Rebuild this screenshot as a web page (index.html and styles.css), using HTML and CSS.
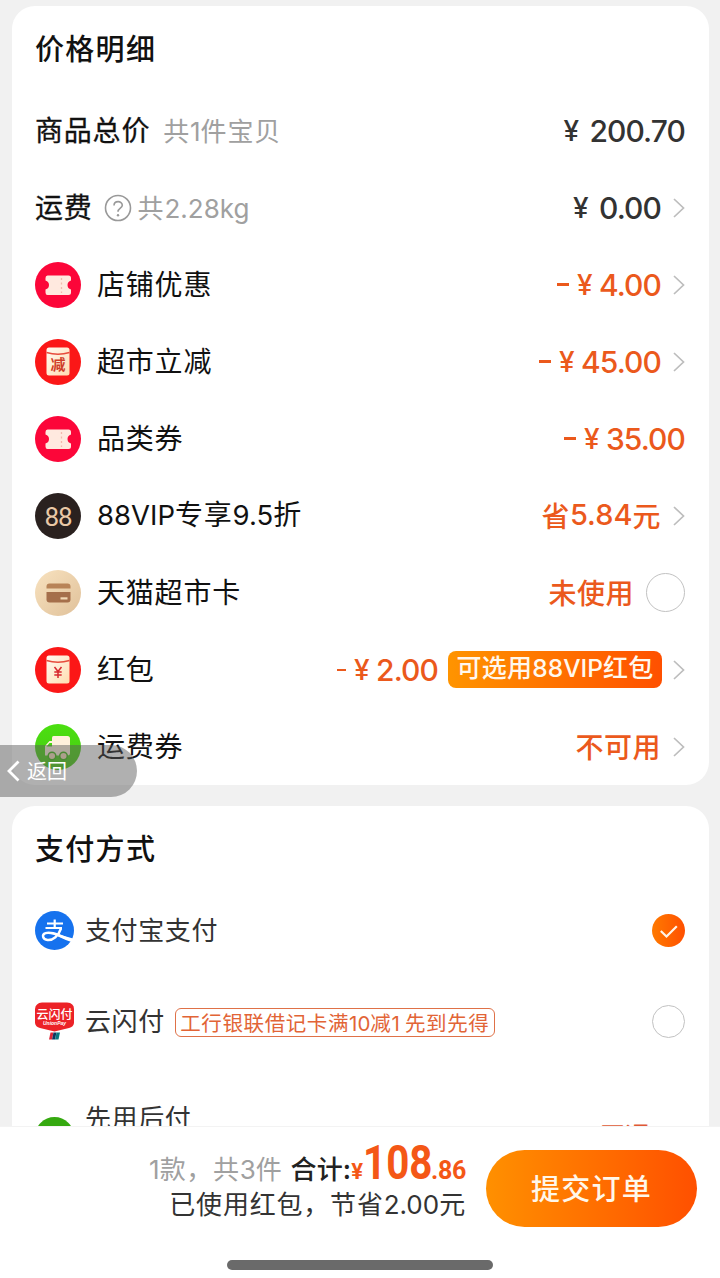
FILE: index.html
```html
<!DOCTYPE html>
<html lang="zh-CN">
<head>
<meta charset="utf-8">
<title>确认订单</title>
<link rel="stylesheet" href="styles.css">
</head>
<body>
<svg class="defs" width="0" height="0">
  <defs>
    <linearGradient id="cream" x1="0" y1="0" x2="1" y2="1"><stop offset="0" stop-color="#fffaf2"/><stop offset="1" stop-color="#ffdcb0"/></linearGradient>
    <linearGradient id="gold" x1="0" y1="0" x2="1" y2="1"><stop offset="0" stop-color="#f8e2bf"/><stop offset="1" stop-color="#e0c19a"/></linearGradient>
    <linearGradient id="green" x1="0" y1="0" x2="0" y2="1"><stop offset="0" stop-color="#4be010"/><stop offset="1" stop-color="#48c814"/></linearGradient>
    <linearGradient id="orange" x1="0" y1="0" x2="1" y2="0"><stop offset="0" stop-color="#ff7a00"/><stop offset="1" stop-color="#ff5000"/></linearGradient>
    <symbol id="chevron" viewBox="0 0 12 20"><path d="M1 1L10.5 10L1 19" fill="none" stroke="#bdbdbd" stroke-width="1.7"/></symbol>
    <symbol id="ticket" viewBox="0 0 46 46">
      <circle cx="23" cy="23" r="23" fill="#fc0639"/>
      <path d="M12.500 13.500H33.500Q36 13.500 36 16V18.500Q32.500 19.500 32.500 23Q32.500 26.500 36 27.500V30.500Q36 33 33.500 33H12.500Q10.500 33 10.500 30.500V27.500Q14 26.500 14 23Q14 19.500 10.500 18.500V16Q10.500 13.500 12.500 13.500Z" fill="#ffe9df"/>
      <path d="M26.500 16V31" stroke="#f3b9ad" stroke-width="1.300" stroke-dasharray="2 2.500"/>
    </symbol>
    <symbol id="packet" viewBox="0 0 46 46">
      <circle cx="23" cy="23" r="23" fill="#fb1717"/>
      <path d="M14 8.500H32Q34.500 8.500 34.500 11V34Q34.500 36.500 32 36.500H14Q11.500 36.500 11.500 34V11Q11.500 8.500 14 8.500Z" fill="url(#cream)"/>
      <path d="M11.500 13.500Q23 17 34.500 13.500" fill="none" stroke="#e74c3c" stroke-width="1.500"/>
    </symbol>
  </defs>
</svg>
<div class="screen">
  <main class="content">
    <section class="card price">
      <h2 class="title">价格明细</h2>
      <div class="row"><span class="label strong">商品总价</span><span class="note">共<i class="n">1</i>件宝贝</span><span class="amount dark"><b class="yen">¥</b>200.70</span></div>
      <div class="row"><span class="label strong">运费</span>
        <svg class="help" viewBox="0 0 28 28"><circle cx="14" cy="14" r="12.500" fill="none" stroke="#999" stroke-width="1.600"/><path d="M10 11.500C10 6.300 18.300 6.500 18.300 11.200C18.300 14.300 14 14 14 17.800" fill="none" stroke="#999" stroke-width="1.600"/><circle cx="14" cy="21.300" r="1.200" fill="#999"/></svg>
        <span class="note weight">共<i class="n">2.28kg</i></span><span class="amount dark"><b class="yen">¥</b>0.00</span><svg class="arrow"><use href="#chevron"/></svg></div>
      <div class="row"><svg class="icon"><use href="#ticket"/></svg><span class="label">店铺优惠</span><span class="amount"><b class="dash"></b><b class="yen near">¥</b>4.00</span><svg class="arrow"><use href="#chevron"/></svg></div>
      <div class="row"><svg class="icon" viewBox="0 0 46 46"><use href="#packet"/><text x="23" y="31" text-anchor="middle" class="cut">减</text></svg><span class="label">超市立减</span><span class="amount"><b class="dash"></b><b class="yen near">¥</b>45.00</span><svg class="arrow"><use href="#chevron"/></svg></div>
      <div class="row"><svg class="icon"><use href="#ticket"/></svg><span class="label">品类券</span><span class="amount"><b class="dash"></b><b class="yen near">¥</b>35.00</span></div>
      <div class="row"><svg class="icon" viewBox="0 0 46 46"><circle cx="23" cy="23" r="23" fill="#2a211f"/><text x="23" y="32.500" text-anchor="middle" class="vip">88</text></svg><span class="label"><i class="n">88VIP</i>专享<i class="n">9.5</i>折</span><span class="amount cn">省<i class="n">5.84</i>元</span><svg class="arrow"><use href="#chevron"/></svg></div>
      <div class="row"><svg class="icon" viewBox="0 0 46 46"><circle cx="23" cy="23" r="23" fill="url(#gold)"/><path d="M14.500 13.500H32.500Q35.500 13.500 35.500 16.500V18.500H11.500V16.500Q11.500 13.500 14.500 13.500Z" fill="#b88357"/><path d="M11.500 22H35.500V29.500Q35.500 32.500 32.500 32.500H14.500Q11.500 32.500 11.500 29.500Z" fill="#a56f4b"/><rect x="25.500" y="27.300" width="7" height="2.200" fill="#f3d9b5"/></svg><span class="label">天猫超市卡</span><span class="amount cn">未使用</span><span class="radio large"></span></div>
      <div class="row"><svg class="icon" viewBox="0 0 46 46"><use href="#packet"/><path d="M19.500 20L23 24.500L26.500 20M23 24.500V31M19.300 25H26.700M19.300 28H26.700" fill="none" stroke="#d8272f" stroke-width="1.500"/></svg><span class="label">红包</span><span class="amount"><b class="dash thin"></b><b class="yen near">¥</b>2.00</span><span class="coupon">可选用<i class="n">88VIP</i>红包</span><svg class="arrow"><use href="#chevron"/></svg></div>
      <div class="row"><svg class="icon" viewBox="0 0 46 46"><circle cx="23" cy="23" r="23" fill="url(#green)"/><path d="M18.500 12H32.500Q35 12 35 14.500V29Q35 31.500 32.500 31.500H10V22L14.500 17H17V14Q17 12 18.500 12Z" fill="#fff0dc"/><path d="M11.500 22.500L14.500 19H17V22.500Z" fill="#48d412"/><circle cx="17" cy="32" r="3.800" fill="#f7dfba" stroke="#3fb513" stroke-width="1.500"/><circle cx="28.500" cy="32" r="3.800" fill="#f7dfba" stroke="#3fb513" stroke-width="1.500"/></svg><span class="label">运费券</span><span class="amount cn">不可用</span><svg class="arrow"><use href="#chevron"/></svg></div>
    </section>
    <section class="card payment">
      <h2 class="title">支付方式</h2>
      <div class="method"><svg class="logo" viewBox="0 0 39 39"><circle cx="19.500" cy="19.500" r="19.500" fill="#1672ee"/><g fill="none" stroke="#fff"><path d="M12 12.500H28M19.700 8.500V17M10.500 17H27" stroke-width="2.200"/><path d="M26 17.500C23.500 25 18 29.500 12.500 29C7.500 28.500 6.500 23.500 10.500 22.200C16 20 24 24.500 36 29" stroke-width="2.400"/></g><path d="M24 23.500L38 27.500L36.500 31Q30 29 22.500 25.300Z" fill="#fff"/></svg><span class="name">支付宝支付</span>
        <svg class="check" viewBox="0 0 33 33"><circle cx="16.500" cy="16.500" r="16.500" fill="url(#orange)"/><path d="M8.800 17L14.500 22.500L24.800 12.200" fill="none" stroke="#fff5e8" stroke-width="2.200"/></svg></div>
      <div class="method second"><svg class="logo" viewBox="0 0 39 39"><path d="M7 .5H32Q39 1 39 7V21Q38.500 25 34 26L19.500 29.500L5 26Q.5 25 0 21V7Q.5 1 7 .5Z" fill="#ec2227"/><text x="19.500" y="16.500" text-anchor="middle" class="union">云闪付</text><text x="19.500" y="23" text-anchor="middle" class="unionpay">UnionPay</text><path d="M15.500 30.500H18.500L17 37.500H14Z" fill="#df2636"/><path d="M18.500 30.500H21.500L20 37.500H17Z" fill="#10355f"/><path d="M21.500 30.500H25L23.500 37.500H20Z" fill="#097780"/></svg><span class="name">云闪付</span><span class="promo">工行银联借记卡满<i class="n">10</i>减<i class="n">1</i> 先到先得</span><span class="radio"></span></div>
      <div class="method third"><svg class="logo later" viewBox="0 0 39 39"><circle cx="19.500" cy="19.500" r="19.500" fill="#35a910"/></svg><span class="name">先用后付</span><span class="open">开通</span></div>
    </section>
  </main>
  <footer class="bar">
    <div class="summary">
      <div class="total"><span class="count"><i class="n">1</i>款，共<i class="n">3</i>件</span><span class="sum">合计:</span><span class="cur">¥</span><span class="whole">108</span><span class="cents">.86</span></div>
      <div class="saved">已使用红包，节省<i class="n">2.00</i>元</div>
    </div>
    <button class="submit">提交订单</button>
  </footer>
  <div class="home"></div>
  <div class="back"><svg viewBox="0 0 13 22"><path d="M11.500 1.500L2 11L11.500 20.500" fill="none" stroke="#fff" stroke-width="2.800"/></svg><span>返回</span></div>
</div>
</body>
</html>
```
FILE: styles.css
```css
* { box-sizing: border-box; }
body { margin: 0; background: #fff; font-family: "Noto Sans CJK SC", sans-serif; color: #111; }
i, b { font-style: normal; font-weight: inherit; }
.defs { position: absolute; }
.n { font-family: Inter, sans-serif; letter-spacing: 0; }
.screen { position: relative; width: 720px; height: 1278px; overflow: hidden; }
.content { height: 1126px; overflow: hidden; background: #f1f1f1; padding: 6px 11.5px 0; }
.card { background: #fff; border-radius: 23px; padding: 0 23.5px; }
.price { height: 779px; }
.title { margin: 0; height: 86px; line-height: 82px; font-size: 29px; font-weight: 500; letter-spacing: 1.3px; }
.row { height: 77px; display: flex; align-items: center; white-space: nowrap; }
.icon { width: 46px; height: 46px; flex: none; margin-right: 16px; }
.label { font-size: 28px; letter-spacing: .8px; line-height: 40px; padding-bottom: 3px; }
.strong { -webkit-text-stroke: .3px #111; }
.label .n { font-size: 27.5px; }
.note { font-size: 26px; color: #a0a0a0; margin-left: 13px; font-weight: 400; letter-spacing: .8px; padding-bottom: 3px; }
.weight { margin-left: 6px; }
.note .n { font-size: 26px; }
.help { width: 28px; height: 28px; margin-left: 11px; }
.amount { margin-left: auto; display: flex; align-items: center; font: 500 30px/40px Inter, sans-serif; letter-spacing: -.9px; color: #eb591c; }
.dark { color: #333; }
.yen { width: 17px; font-size: 28px; margin-right: 9px; }
.near { margin-right: 5px; }
.dash { width: 12px; height: 3px; background: #eb591c; margin-right: 8px; }
.thin { width: 9px; height: 2px; }
.cn { font: 500 28px/40px "Noto Sans CJK SC", sans-serif; letter-spacing: .5px; padding-bottom: 2px; }
.cn .n { font-size: 29px; }
.arrow { width: 12px; height: 20px; margin-left: 12px; flex: none; }
.coupon { height: 37px; line-height: 31px; width: 214px; text-align: center; margin-left: 10px; border-radius: 8px; background: linear-gradient(90deg, #ff9400, #ff5000); color: #fff8ee; font-size: 25px; font-weight: 500; letter-spacing: .3px; }
.coupon + .arrow { margin-left: 11px; }
.coupon .n { font-size: 24.5px; }
.radio { width: 33px; height: 33px; border: 1.5px solid #c2c2c2; border-radius: 50%; margin-left: auto; flex: none; }
.large { width: 39px; height: 39px; margin-left: 12px; }
.cut { font: 700 15px "Noto Sans CJK SC", sans-serif; fill: #cf3d28; }
.vip { font: 400 26px Roboto, sans-serif; fill: #e9c8a6; letter-spacing: -1px; }
.payment { margin-top: 21px; height: 400px; }
.method { height: 76px; display: flex; align-items: center; white-space: nowrap; }
.second { height: 106px; }
.logo { width: 39px; height: 39px; flex: none; margin-right: 11px; }
.name { font-size: 26px; line-height: 38px; color: #333; letter-spacing: .6px; padding-bottom: 2px; }
.promo { height: 29px; line-height: 26px; width: 320px; text-align: center; margin: 3px 0 0 10px; border: 1.5px solid #df7148; border-radius: 6px; color: #e26436; font-size: 20.5px; letter-spacing: .6px; }
.check { width: 33px; height: 33px; margin-left: auto; }
.union { font: 500 12px "Noto Sans CJK SC", sans-serif; fill: #fff; }
.unionpay { font: italic 700 5px "Liberation Sans", sans-serif; fill: #fff; }
.third { align-items: flex-start; padding-top: 24px; }
.later { margin-top: 19px; }
.open { margin-left: auto; margin-right: 35px; margin-top: 17px; color: #df5935; font-size: 25px; line-height: 38px; }
.bar { height: 126px; border-top: 1px solid #f3f3f3; display: flex; justify-content: flex-end; padding: 23px 23px 0 0; background: #fff; }
.summary { width: 340px; margin-right: 20px; margin-top: -14px; }
.total { display: flex; align-items: baseline; justify-content: flex-end; height: 54px; line-height: 54px; white-space: nowrap; }
.count { font-size: 26px; color: #a0a0a0; letter-spacing: .7px; }
.sum { font-size: 26px; font-weight: 500; color: #222; margin-left: 8px; letter-spacing: .3px; }
.cur, .whole, .cents { font-family: Roboto, sans-serif; font-weight: 700; color: #f45716; }
.cur { font-size: 22px; }
.whole { font-size: 48px; width: 68px; transform: scaleX(.84); transform-origin: left; }
.cents { font-size: 25px; letter-spacing: -.3px; }
.saved { text-align: right; font-size: 26px; line-height: 34px; color: #333; white-space: nowrap; margin-top: -4px; letter-spacing: .8px; }
.submit { width: 211px; height: 77px; border: 0; border-radius: 39px; background: linear-gradient(90deg, #ff9000, #ff5000); color: #fff7ea; font: 500 29px/75px "Noto Sans CJK SC", sans-serif; letter-spacing: 1.3px; padding: 0 0 2px; }
.home { width: 266px; height: 10px; border-radius: 5px; background: #6a6a6a; margin: 8px 0 0 227px; }
.back { position: absolute; left: 0; top: 745px; width: 137px; height: 52px; border-radius: 0 26px 26px 0; background: rgba(90, 90, 90, .48); color: #fff; display: flex; align-items: center; gap: 7px; padding-left: 7px; font-size: 20px; }
.back svg { width: 13px; height: 22px; }
.back span { padding-bottom: 2px; }
```
